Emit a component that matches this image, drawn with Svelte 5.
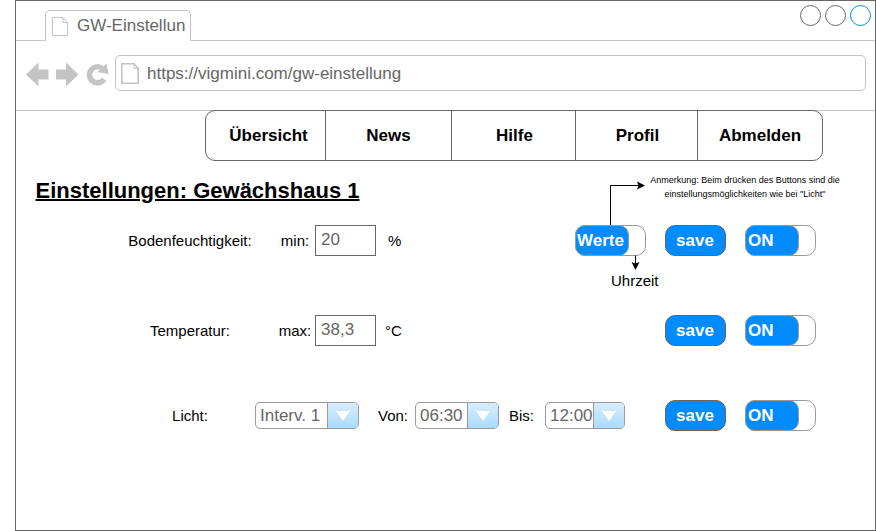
<script>
  const nav = [
    { label: 'Übersicht', width: 120, shift: 3 },
    { label: 'News', width: 126, shift: 0 },
    { label: 'Hilfe', width: 124, shift: 1 },
    { label: 'Profil', width: 122, shift: 1 },
    { label: 'Abmelden', width: 124, shift: 0 }
  ];
</script>

{#snippet page(width, height, stroke)}
  <svg class="page" {width} {height} viewBox="0 0 {width} {height}" fill="none" stroke="#c4c4c4" stroke-width={stroke}>
    <path d="M{stroke / 2} {stroke / 2}H{width - 5}L{width - stroke / 2} 5.5V{height - stroke / 2}H{stroke / 2}Z" />
    <path d="M{width - 5} {stroke / 2}V5.5H{width - stroke / 2}" stroke-width="1" />
  </svg>
{/snippet}

{#snippet toggle(text, inset)}
  <div class="toggle"><div class="knob" style:padding-left="{inset}px"><span>{text}</span></div></div>
{/snippet}

{#snippet select(text, width, arrow)}
  <div class="select" style:width="{width}px">
    <span class="value">{text}</span>
    <div class="drop" style:width="{arrow}px">
      <svg width="16" height="12" viewBox="0 0 16 12"><path d="M1 1H15L8 11Z" fill="#fff" /></svg>
    </div>
  </div>
{/snippet}

<main class="window">
  <header class="tabs">
    <div class="tab">{@render page(16, 19, 1)}<span>GW-Einstellun</span></div>
    <div class="controls"><i></i><i></i><i class="blue"></i></div>
  </header>

  <div class="toolbar">
    <svg class="tools" width="84" height="28" viewBox="0 0 84 28" fill="#c4c4c4">
      <path d="M0 13.5L12.5 1.5V8.5H22.5V18.5H12.5V25.5Z" />
      <path d="M52.5 13.5L40 1.5V8.5H30V18.5H40V25.5Z" />
      <path d="M78.1 18.3A8 8 0 1 1 76.7 7.8" fill="none" stroke="#c4c4c4" stroke-width="5.5" />
      <path d="M80.5 2.5L82.5 13L71.5 11Z" />
    </svg>
    <div class="address">{@render page(18, 21, 1.6)}<span>https://vigmini.com/gw-einstellung</span></div>
  </div>

  <nav>
    {#each nav as item}
      <div class="item" style:width="{item.width}px" style:padding-left="{item.shift * 2}px">{item.label}</div>
    {/each}
  </nav>

  <h1>Einstellungen: Gewächshaus 1</h1>

  <section class="row first">
    <span class="label">Bodenfeuchtigkeit:</span>
    <span class="bound">min:</span>
    <div class="input">20</div>
    <span class="unit percent">%</span>
    <div class="actions">
      {@render toggle('Werte', 1)}
      <div class="save">save</div>
      {@render toggle('ON', 2)}
    </div>
  </section>

  <section class="row second">
    <span class="label">Temperatur:</span>
    <span class="bound">max:</span>
    <div class="input">38,3</div>
    <span class="unit">°C</span>
    <div class="actions">
      <div class="save">save</div>
      {@render toggle('ON', 2)}
    </div>
  </section>

  <section class="row third">
    <span class="label">Licht:</span>
    <div class="times">
      {@render select('Interv. 1', 104, 31)}
      <span class="from">Von:</span>
      {@render select('06:30', 84, 31)}
      <span class="to">Bis:</span>
      {@render select('12:00', 80, 31)}
    </div>
    <div class="actions">
      <div class="save">save</div>
      {@render toggle('ON', 2)}
    </div>
  </section>

  <svg class="arrows" width="80" height="95" viewBox="0 0 80 95">
    <path d="M10.5 45V5.5H40M35.500 75.500V84" fill="none" stroke="#000" />
    <path d="M45 5.500L37 1.500L38.500 5.500L37 9.500ZM35.500 90L31.500 82L35.500 83.500L39.500 82Z" />
  </svg>
  <p class="note">Anmerkung: Beim drücken des Buttons sind die<br />einstellungsmöglichkeiten wie bei "Licht"</p>
  <span class="clock">Uhrzeit</span>
</main>

<style>
  :global(body) { margin: 0; background: #fff; }
  .window {
    position: relative;
    box-sizing: border-box;
    width: 861px;
    height: 531px;
    margin-left: 15px;
    border: 1px solid #666;
    background: #fff;
    font-family: "Liberation Sans", Arial, sans-serif;
    font-size: 15px;
    color: #000;
    white-space: nowrap;
    overflow: hidden;
  }
  .tabs {
    display: flex;
    justify-content: space-between;
    align-items: flex-end;
    box-sizing: border-box;
    height: 40px;
    border-bottom: 1px solid #c4c4c4;
    padding-left: 29px;
  }
  .tab {
    display: flex;
    align-items: center;
    box-sizing: border-box;
    width: 146px;
    height: 31px;
    margin-bottom: -1px;
    border: 1px solid #c4c4c4;
    border-bottom: 0;
    border-radius: 5px 5px 0 0;
    background: #fff;
    padding: 1px 0 0 6px;
    font-size: 17px;
    color: #666;
  }
  .tab span { margin: 0 0 2px 9px; }
  .page { display: block; flex: none; }
  .controls { display: flex; gap: 4px; align-self: flex-start; padding: 4px 4px 0 0; }
  .controls i { box-sizing: border-box; width: 21px; height: 21px; border: 1px solid #666; border-radius: 50%; }
  .controls .blue { border-color: #008cff; }
  .toolbar {
    display: flex;
    align-items: flex-start;
    box-sizing: border-box;
    height: 70px;
    border-bottom: 1px solid #c4c4c4;
    padding: 14px 9px 0 10px;
  }
  .tools { margin: 6px 5px 0 0; }
  .address {
    flex: 1;
    display: flex;
    align-items: center;
    box-sizing: border-box;
    height: 36px;
    border: 1px solid #c4c4c4;
    border-radius: 5px;
    padding-left: 5px;
    font-size: 17px;
    color: #666;
  }
  .address span { margin: 2px 0 0 8px; }
  nav {
    position: relative;
    display: flex;
    box-sizing: border-box;
    width: 618px;
    height: 51px;
    margin: -1px 0 0 189px;
    border: 1px solid #666;
    border-radius: 10px;
    background: #fff;
  }
  .item {
    flex: none;
    box-sizing: border-box;
    border-right: 1px solid #666;
    font-size: 17px;
    font-weight: bold;
    line-height: 50px;
    text-align: center;
  }
  .item:last-child { border-right: 0; }
  h1 {
    margin: 17px 0 0 19.5px;
    font-size: 22px;
    line-height: 26px;
    text-decoration-thickness: 2px;
    text-decoration-line: underline;
  }
  .row {
    display: flex;
    align-items: center;
    width: 696px;
    height: 31px;
    margin-left: 104px;
  }
  .first { margin-top: 21px; }
  .second { margin-top: 59px; }
  .third { margin-top: 54px; }
  .label { width: 140px; text-align: center; }
  .bound { width: 40px; margin-left: 15px; text-align: center; }
  .input {
    box-sizing: border-box;
    width: 61px;
    height: 31px;
    border: 1px solid #666;
    padding-left: 5px;
    font-size: 17px;
    line-height: 28px;
    color: #666;
  }
  .unit { margin-left: 9px; }
  .percent { margin-left: 12px; }
  .actions { display: flex; margin-left: auto; color: #fff; font-size: 17px; font-weight: bold; }
  .save {
    box-sizing: border-box;
    width: 61px;
    height: 31px;
    margin: 0 19px;
    border: 1px solid #666;
    border-radius: 10px;
    background: #008cff;
    padding-right: 1px;
    line-height: 29px;
    text-align: center;
  }
  .toggle {
    box-sizing: border-box;
    width: 71px;
    height: 31px;
    border: 1px solid #999;
    border-radius: 10px;
    background: #fff;
  }
  .knob {
    box-sizing: border-box;
    width: 54px;
    height: 31px;
    margin: -1px;
    border: 1px solid #999;
    border-radius: 10px;
    background: #008cff;
    line-height: 29px;
  }
  .times { display: flex; align-items: center; margin-left: -5px; }
  .select {
    display: flex;
    justify-content: space-between;
    box-sizing: border-box;
    height: 27px;
    border: 1px solid #999;
    border-radius: 5px;
    overflow: hidden;
    font-size: 17px;
    line-height: 25px;
    color: #666;
  }
  .value { width: 0; padding-left: 4px; }
  .drop {
    display: flex;
    align-items: center;
    justify-content: center;
    box-sizing: border-box;
    border-left: 1px solid #999;
    background: linear-gradient(#d9ecff, #a9dcff);
  }
  .from { width: 37px; margin-left: 19px; }
  .to { width: 36px; margin-left: 10px; }
  .arrows { position: absolute; left: 584px; top: 179px; }
  .note {
    position: absolute;
    left: 629px;
    top: 172px;
    width: 200px;
    margin: 0;
    font-size: 9px;
    line-height: 14px;
    text-align: center;
  }
  .clock { position: absolute; left: 595px; top: 271px; }
</style>
